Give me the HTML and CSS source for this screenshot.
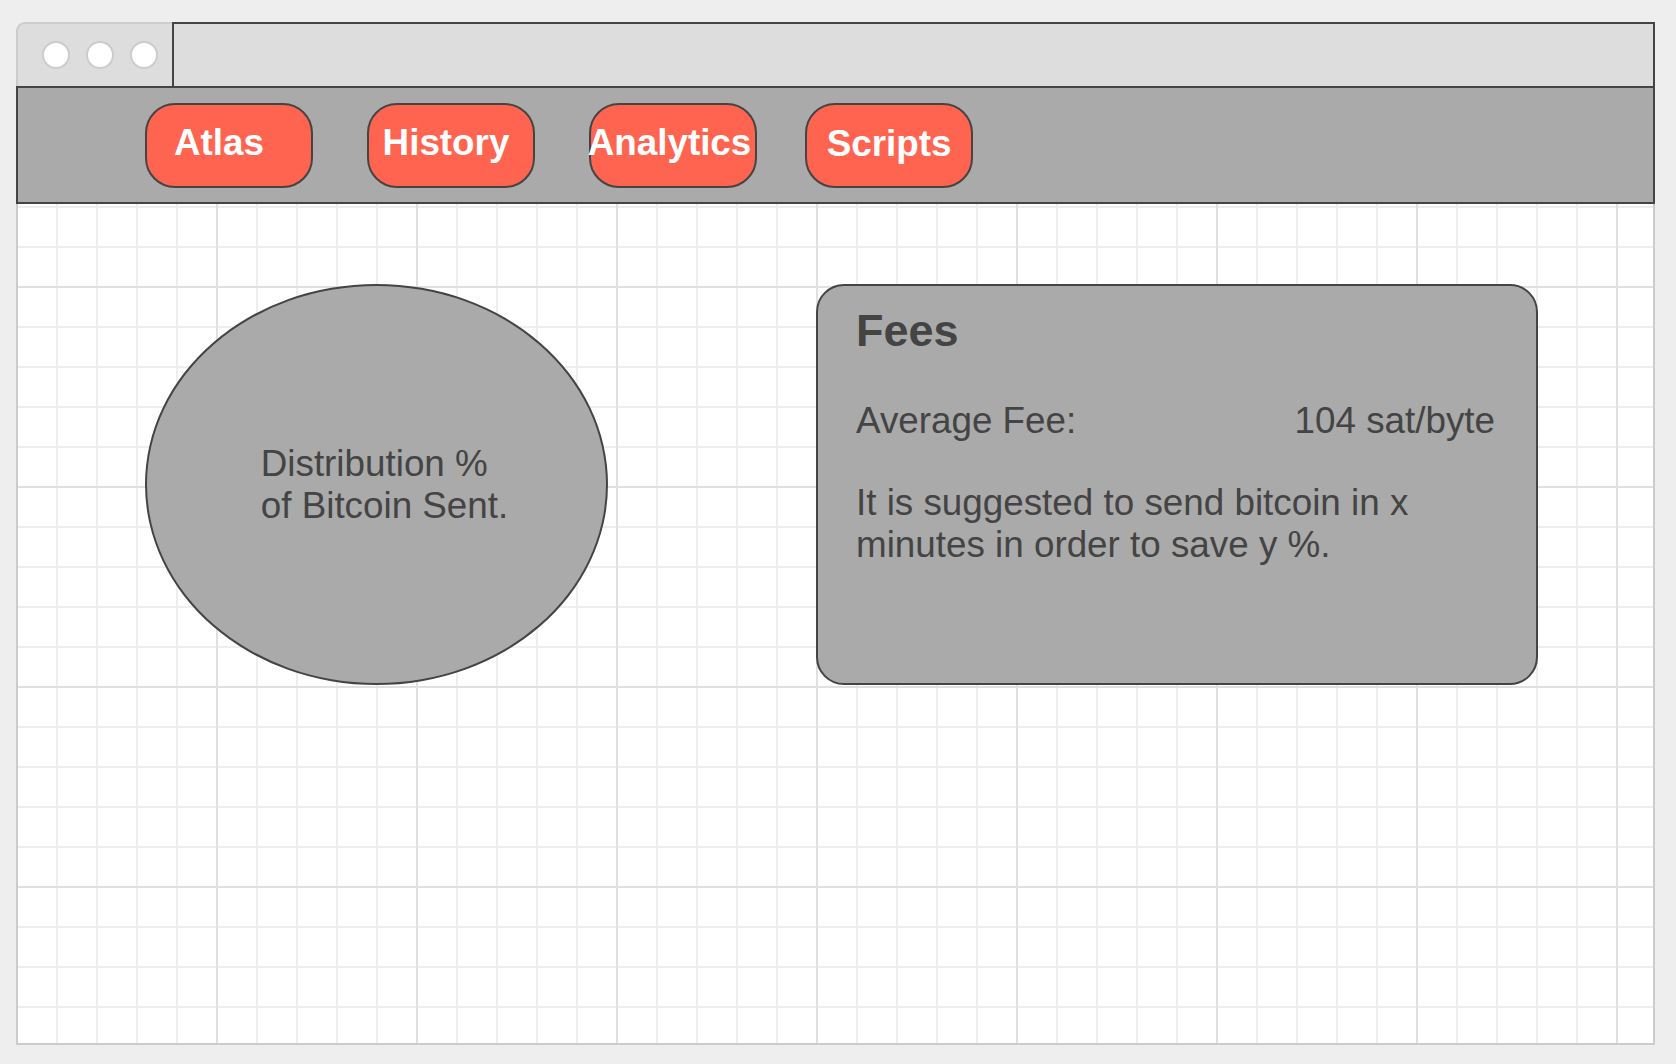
FILE: index.html
```html
<!DOCTYPE html>
<html lang="en">
<head>
<meta charset="utf-8">
<title>Bitcoin Fees Mockup</title>
<link rel="stylesheet" href="styles.css">
</head>
<body>
<div class="window">
  <div class="titlebar">
    <div class="tabs">
      <span class="dot"></span>
      <span class="dot"></span>
      <span class="dot"></span>
    </div>
    <div class="address"></div>
  </div>
  <nav class="nav">
    <div class="btn btn-atlas">Atlas</div>
    <div class="btn btn-history">History</div>
    <div class="btn btn-analytics">Analytics</div>
    <div class="btn btn-scripts">Scripts</div>
  </nav>
  <main class="canvas">
    <div class="ellipse">
      <div class="ellipse-text">Distribution %<br>of Bitcoin Sent.</div>
    </div>
    <section class="card">
      <h2 class="card-title">Fees</h2>
      <div class="fee-row">
        <span>Average Fee:</span>
        <span>104 sat/byte</span>
      </div>
      <p class="card-text">It is suggested to send bitcoin in x minutes in order to save y %.</p>
    </section>
  </main>
</div>
</body>
</html>
```

FILE: styles.css
```css
html, body {
  margin: 0;
  padding: 0;
}

body {
  background: #eeeeee;
  font-family: "Liberation Sans", Arial, sans-serif;
  color: #444444;
}

.window {
  margin: 22px 0 0 16px;
  width: 1639px;
  display: flex;
  flex-direction: column;
}

.titlebar {
  display: flex;
  height: 64px;
}

.tabs {
  width: 156px;
  box-sizing: border-box;
  background: #dddddd;
  border-top: 2px solid #cccccc;
  border-left: 2px solid #cccccc;
  border-top-left-radius: 9px;
  display: flex;
  align-items: center;
  padding-left: 24px;
  gap: 16px;
}

.dot {
  width: 24px;
  height: 24px;
  border-radius: 50%;
  background: #ffffff;
  border: 2px solid #cccccc;
  flex: none;
}

.address {
  flex: 1;
  background: #dddddd;
  border: 2px solid #444444;
  border-bottom: none;
}

.nav {
  height: 114px;
  background: #aaaaaa;
  border: 2px solid #444444;
  display: flex;
  align-items: center;
  padding-left: 127px;
  gap: 54px;
}

.btn {
  width: 168px;
  height: 85px;
  box-sizing: border-box;
  background: #ff6450;
  border: 2px solid #444444;
  border-radius: 30px;
  display: flex;
  align-items: center;
  justify-content: center;
  color: #ffffff;
  font-weight: bold;
  font-size: 36.8px;
  white-space: nowrap;
  padding-bottom: 5px;
  flex: none;
}

.btn-atlas {
  padding-right: 20px;
}

.btn-history {
  padding-right: 10px;
}

.btn-analytics {
  padding-right: 7px;
}

.btn-scripts {
  margin-left: -6px;
  padding-bottom: 3px;
}

.canvas {
  height: 841px;
  box-sizing: border-box;
  background-color: #ffffff;
  background-image:
    linear-gradient(to right, #e0e0e0 2px, transparent 2px),
    linear-gradient(to bottom, #e0e0e0 2px, transparent 2px),
    linear-gradient(to right, #eeeeee 2px, transparent 2px),
    linear-gradient(to bottom, #eeeeee 2px, transparent 2px);
  background-size:
    200px 100%,
    100% 200px,
    40px 100%,
    100% 40px;
  background-position:
    198px 0,
    0 82px,
    38px 0,
    0 2px;
  border: 2px solid #cccccc;
  border-top: none;
  display: flex;
  align-items: flex-start;
  padding: 80px 0 0 127px;
  gap: 208px;
}

.ellipse {
  width: 463px;
  height: 401px;
  box-sizing: border-box;
  border: 2px solid #444444;
  border-radius: 50%;
  background: #aaaaaa;
  display: flex;
  align-items: center;
  justify-content: center;
  flex: none;
}

.ellipse-text {
  font-size: 36.8px;
  line-height: 42px;
  padding-left: 16px;
  color: #444444;
}

.card {
  width: 722px;
  height: 401px;
  box-sizing: border-box;
  border: 2px solid #444444;
  border-radius: 28px;
  background: #aaaaaa;
  padding: 20px 41px 0 38px;
  flex: none;
}

.card-title {
  margin: 0 0 44px;
  font-size: 45px;
  line-height: 50px;
  font-weight: bold;
  color: #444444;
}

.fee-row {
  display: flex;
  justify-content: space-between;
  font-size: 36.8px;
  line-height: 42px;
  margin-bottom: 40px;
}

.card-text {
  margin: 0;
  font-size: 36.8px;
  line-height: 42px;
}
```
